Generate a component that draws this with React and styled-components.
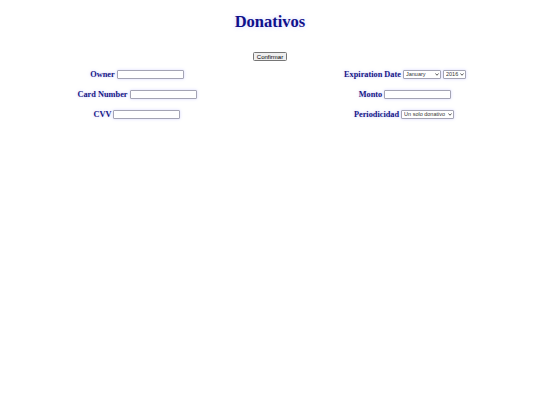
import React from "react";
import styled, { createGlobalStyle } from "styled-components";

const GlobalStyle = createGlobalStyle`
  html, body {
    margin: 0;
    padding: 0;
    background: #ffffff;
  }
  body {
    font-family: "Liberation Serif", "Times New Roman", serif;
  }
`;

const Page = styled.div`
  width: 540px;
  height: 405px;
  display: flex;
  flex-direction: column;
  align-items: center;
`;

const Title = styled.h1`
  margin: 12px 0 0 0;
  font-size: 16.5px;
  line-height: 19px;
  font-weight: bold;
  color: #10108a;
  text-shadow: 0 0 4px rgba(140, 140, 255, 0.35);
`;

const ConfirmButton = styled.button`
  zoom: 0.5;
  margin-top: 42px;
  font-family: "Liberation Sans", Arial, sans-serif;
  font-size: 12px;
`;

const Columns = styled.div`
  width: 100%;
  margin-top: 8px;
  display: grid;
  grid-template-columns: 1fr 1fr;
`;

const Column = styled.div`
  display: flex;
  flex-direction: column;
  align-items: center;
  gap: 9px;
`;

const Row = styled.div`
  display: flex;
  align-items: center;
  gap: 2px;
  height: 11px;
  transform: translateX(${(p) => p.$shift || 0}px);
`;

const Label = styled.label`
  font-size: 8.3px;
  font-weight: bold;
  color: #161684;
  text-shadow: 0 0 3px rgba(150, 150, 255, 0.5);
  white-space: nowrap;
`;

const TextInput = styled.input`
  box-sizing: border-box;
  width: 67px;
  height: 9px;
  padding: 0;
  border: 1px solid #a4a4b4;
  border-radius: 1px;
  box-shadow: 0 0 3px rgba(140, 140, 255, 0.35);
  background: #fff;
`;

const SelectWrap = styled.span`
  position: relative;
  display: inline-flex;
`;

const Select = styled.select`
  appearance: none;
  -webkit-appearance: none;
  box-sizing: border-box;
  width: ${(p) => p.$w}px;
  height: 9px;
  margin: 0;
  padding: 0 6px 0 2px;
  font-family: "Liberation Sans", Arial, sans-serif;
  font-size: 5.5px;
  line-height: 7px;
  color: #333;
  background: #fff;
  border: 1px solid #a4a4b4;
  border-radius: 1px;
  box-shadow: 0 0 3px rgba(140, 140, 255, 0.35);
`;

const Chevron = styled.svg`
  position: absolute;
  right: 2px;
  top: 3px;
  width: 4px;
  height: 3px;
  pointer-events: none;
`;

const months = [
  "January", "February", "March", "April", "May", "June",
  "July", "August", "September", "October", "November", "December",
];

const Dropdown = ({ w, children, ...rest }) => (
  <SelectWrap>
    <Select $w={w} {...rest}>
      {children}
    </Select>
    <Chevron viewBox="0 0 8 6">
      <path d="M1 1 L4 4.5 L7 1" fill="none" stroke="#333" strokeWidth="1.6" />
    </Chevron>
  </SelectWrap>
);

export default function App() {
  return (
    <>
      <GlobalStyle />
      <Page>
        <Title>Donativos</Title>
        <ConfirmButton>Confirmar</ConfirmButton>
        <Columns>
          <Column>
            <Row $shift={2}>
              <Label>Owner</Label>
              <TextInput />
            </Row>
            <Row $shift={2}>
              <Label>Card Number</Label>
              <TextInput />
            </Row>
            <Row $shift={2}>
              <Label>CVV</Label>
              <TextInput />
            </Row>
          </Column>
          <Column>
            <Row>
              <Label>Expiration Date</Label>
              <Dropdown w={38} defaultValue="January">
                {months.map((m) => (
                  <option key={m}>{m}</option>
                ))}
              </Dropdown>
              <Dropdown w={23} defaultValue="2016">
                <option>2016</option>
                <option>2017</option>
                <option>2018</option>
              </Dropdown>
            </Row>
            <Row>
              <Label>Monto</Label>
              <TextInput />
            </Row>
            <Row $shift={-1}>
              <Label>Periodicidad</Label>
              <Dropdown w={53}>
                <option>Un solo donativo</option>
                <option>Mensual</option>
              </Dropdown>
            </Row>
          </Column>
        </Columns>
      </Page>
    </>
  );
}
